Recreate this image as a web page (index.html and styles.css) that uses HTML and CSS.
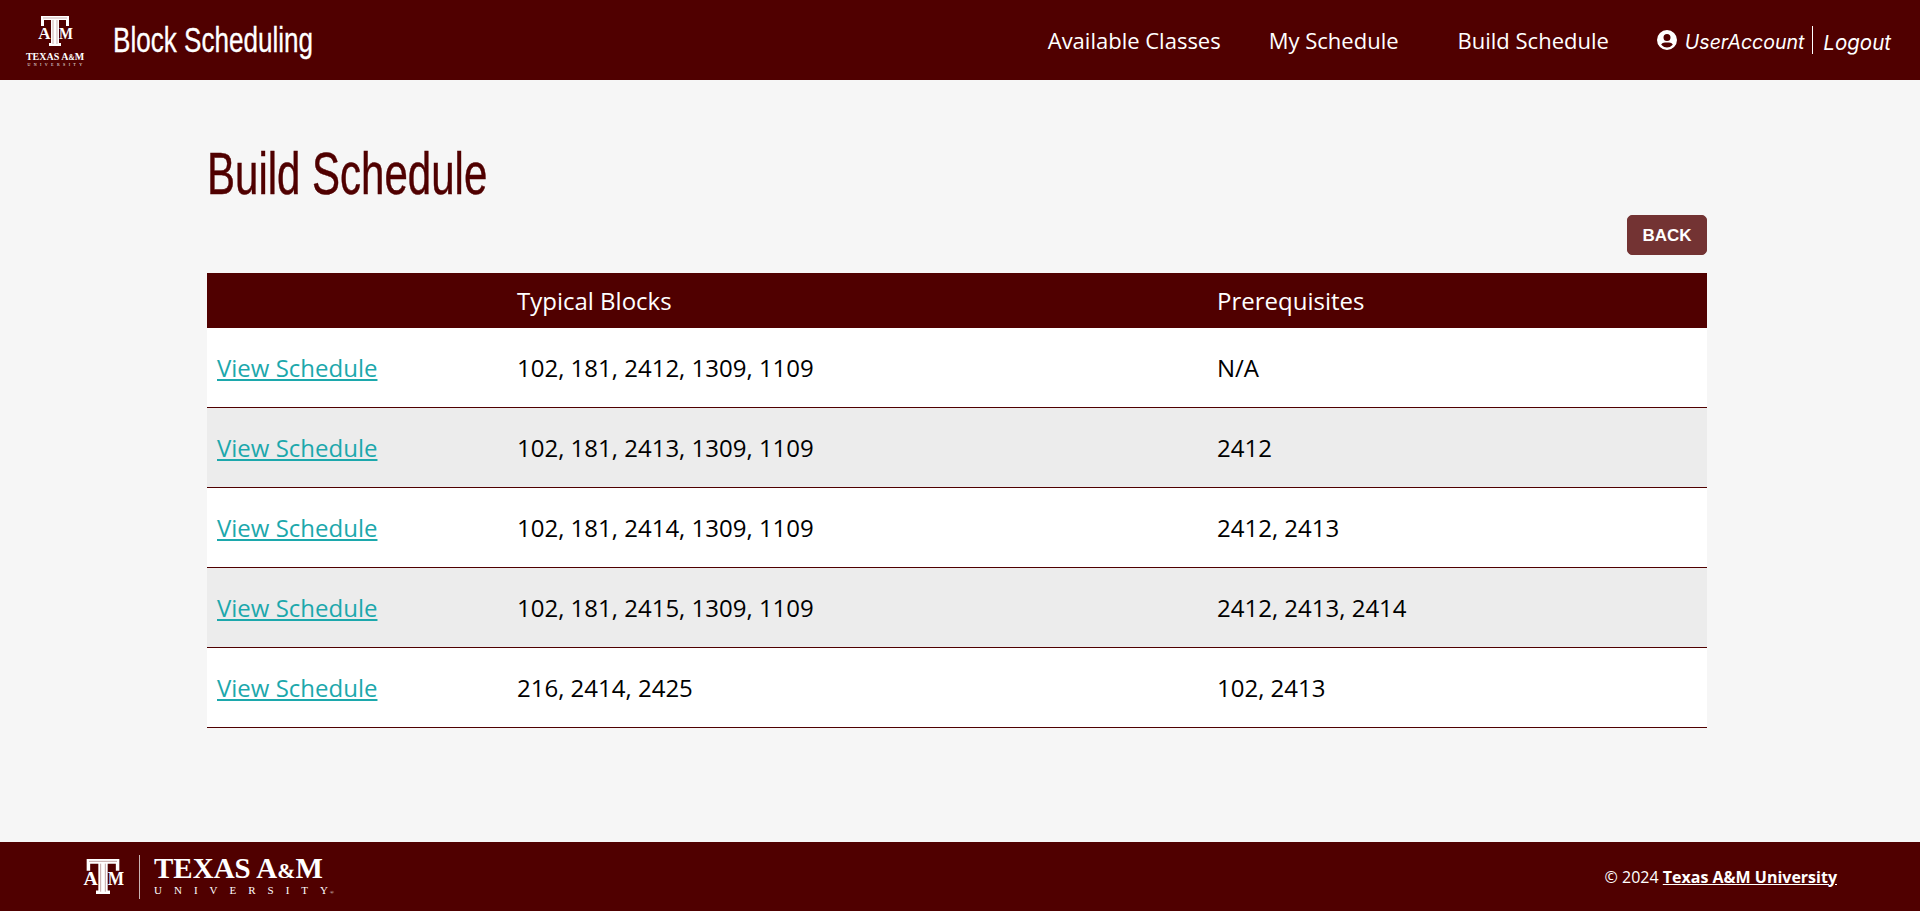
FILE: index.html
```html
<!DOCTYPE html>
<html lang="en">
<head>
	<meta charset="UTF-8">
	<title>Block Scheduling</title>
	<link rel="stylesheet" href="styles.css">
</head>
<body>
<svg class="defs" width="0" height="0">
    <symbol id="atm" viewBox="0 0 36 30">
        <path fill="#fff" d="M4 0H32V10H29V4H22V27H24V30H12V27H14V4H7V10H4Z"/>
        <path fill="none" stroke="#a98080" stroke-width=".6" d="M6 2H30M16 4V28M20 4V28"/>
        <text x="7.500" y="22.500" text-anchor="middle" class="logoLetter">A</text>
        <text x="22" y="22.500" textLength="14" lengthAdjust="spacingAndGlyphs" class="logoLetter">M</text>
    </symbol>
</svg>
<header class="topBar">
    <a class="brand" href="#">
        <span class="brandLogo">
            <svg class="brandMark"><use href="#atm"/></svg>
            <span class="brandName">TEXAS A<small>&amp;</small>M</span>
            <span class="brandSub">UNIVERSITY</span>
        </span>
        <span class="appName">Block Scheduling</span>
    </a>
    <nav class="mainNav">
        <a href="#" class="navClasses">Available Classes</a>
        <a href="#" class="navMine">My Schedule</a>
        <a href="#" class="navBuild">Build Schedule</a>
    </nav>
    <div class="account">
        <svg class="userIcon" viewBox="0 0 20 20"><path fill="#fff" fill-rule="evenodd" d="M10 0a10 10 0 1 0 0 20a10 10 0 0 0 0-20ZM10 4a3.500 3.500 0 1 1 0 7a3.500 3.500 0 0 1 0-7ZM10 17.500a7.700 7.700 0 0 1-5.800-2.700c.7-1.400 2.100-2.300 3.800-2.300h4c1.700 0 3.100.9 3.800 2.300a7.700 7.700 0 0 1-5.800 2.700Z"/></svg>
        <span class="userName">UserAccount</span>
        <a href="#" class="logout">Logout</a>
    </div>
</header>

<main class="content">
    <h1 class="pageTitle">Build Schedule</h1>
    <div class="actions"><button class="backBtn">BACK</button></div>
    <table class="blocks">
        <thead><tr><th></th><th>Typical Blocks</th><th>Prerequisites</th></tr></thead>
        <tbody>
            <tr><td><a href="#">View Schedule</a></td><td>102, 181, 2412, 1309, 1109</td><td>N/A</td></tr>
            <tr><td><a href="#">View Schedule</a></td><td>102, 181, 2413, 1309, 1109</td><td>2412</td></tr>
            <tr><td><a href="#">View Schedule</a></td><td>102, 181, 2414, 1309, 1109</td><td>2412, 2413</td></tr>
            <tr><td><a href="#">View Schedule</a></td><td>102, 181, 2415, 1309, 1109</td><td>2412, 2413, 2414</td></tr>
            <tr><td><a href="#">View Schedule</a></td><td>216, 2414, 2425</td><td>102, 2413</td></tr>
        </tbody>
    </table>
</main>

<footer class="bottomBar">
    <div class="footLogo">
        <svg class="footMark"><use href="#atm"/></svg>
        <div class="footWords">
            <span class="footName">TEXAS A<small>&amp;</small>M</span>
            <span class="footSub">UNIVERSIT<span class="lastY">Y</span><span class="regMark">®</span></span>
        </div>
    </div>
    <p class="copy">© 2024 <a href="#">Texas A&amp;M University</a></p>
</footer>
</body>
</html>
```

FILE: styles.css
```css
body,html{
    padding: 0;
    margin: 0;
    height: 100%;
}
body{
    display: flex;
    flex-direction: column;
    background: #f6f6f6;
    color: #000000;
    font-family: "Open Sans", "Liberation Sans", sans-serif;
}
a{
    color: inherit;
}
small{
    font-size: 75%;
}
.defs{
    display: none;
}
.logoLetter{
    font-family: "Liberation Serif", serif;
    font-weight: 700;
    font-size: 17px;
    fill: #ffffff;
}

/* header */
.topBar{
    flex: none;
    display: flex;
    align-items: center;
    height: 80px;
    background: #500000;
    color: #ffffff;
}
.brand{
    display: flex;
    align-items: center;
    margin-left: 25px;
    text-decoration: none;
}
.brandLogo{
    display: flex;
    flex-direction: column;
    align-items: center;
    width: 60px;
    margin-top: 2px;
}
.brandMark{
    width: 36px;
    height: 30px;
}
.brandName{
    margin-top: 6px;
    font-family: "Liberation Serif", serif;
    font-size: 10px;
    font-weight: 700;
    line-height: 9px;
    white-space: nowrap;
}
.brandSub{
    font-family: "Liberation Serif", serif;
    font-size: 4px;
    line-height: 5px;
    letter-spacing: 3.400px;
    margin-right: -3px;
}
/* no condensed face installed, so these are squeezed by hand */
.appName{
    margin-left: 28px;
    font-family: "Liberation Sans", sans-serif;
    font-size: 35px;
    transform: scaleX(.745);
    transform-origin: left center;
    -webkit-text-stroke: .3px #ffffff;
}
.mainNav{
    display: flex;
    margin-left: auto;
    font-size: 22px;
}
.mainNav a{
    text-decoration: none;
}
.navClasses{
    margin-right: 48px;
}
.navMine{
    margin-right: 59px;
}
.navBuild{
    margin-right: 48px;
}
.account{
    display: flex;
    align-items: center;
    margin-right: 29px;
    font-family: "Inter", sans-serif;
    font-style: italic;
    font-size: 19.500px;
}
.userIcon{
    width: 20px;
    height: 20px;
    margin-right: 8px;
}
.userName{
    height: 28px;
    padding-right: 8px;
    border-right: 1px solid #ffffff;
    line-height: 33px;
}
.logout{
    height: 28px;
    margin-left: 10px;
    font-size: 20.500px;
    line-height: 33px;
    text-decoration: none;
}

/* main */
.content{
    flex: 1;
    width: 1500px;
    margin: 0 213px 0 207px;
}
.pageTitle{
    margin: 58px 0 0 0;
    color: #500000;
    font-family: "Liberation Sans", sans-serif;
    font-size: 59px;
    font-weight: 400;
    line-height: 72px;
    transform: scaleX(.712);
    transform-origin: left center;
    -webkit-text-stroke: .5px #500000;
}
.actions{
    display: flex;
    justify-content: flex-end;
    margin-top: 5px;
}
.backBtn{
    width: 80px;
    height: 40px;
    padding: 1px 0 0 0;
    border: 1px solid #733333;
    border-radius: 5px;
    background: #733333;
    color: #ffffff;
    font-family: "Liberation Sans", sans-serif;
    font-size: 17px;
    font-weight: 700;
}
.blocks{
    width: 100%;
    margin-top: 18px;
    border-collapse: collapse;
    table-layout: fixed;
    font-size: 24px;
}
.blocks th,.blocks td{
    padding: 0 10px;
}
.blocks th{
    box-sizing: border-box;
    height: 55px;
    font-weight: 400;
    text-align: left;
}
.blocks th:nth-child(1){
    width: 300px;
}
.blocks th:nth-child(2){
    width: 700px;
}
.blocks thead{
    background: #500000;
    color: #ffffff;
}
.blocks td{
    height: 79px;
    border-bottom: 1px solid #500000;
}
.blocks tbody tr{
    background: #ffffff;
}
.blocks tbody tr:nth-child(even){
    background: #ececec;
}
.blocks a{
    color: #1ca8ac;
}

/* footer */
.bottomBar{
    flex: none;
    display: flex;
    align-items: center;
    justify-content: space-between;
    height: 69px;
    padding: 0 83px 0 82px;
    background: #500000;
    color: #ffffff;
}
.footLogo{
    display: flex;
    align-items: center;
}
.footMark{
    width: 42px;
    height: 35px;
}
.footWords{
    display: flex;
    flex-direction: column;
    margin-left: 15px;
    padding-left: 14px;
    border-left: 1px solid #c9b4b4;
    font-family: "Liberation Serif", serif;
}
.footName{
    font-size: 29px;
    font-weight: 700;
    line-height: 26px;
    white-space: nowrap;
}
.footSub{
    font-size: 11px;
    line-height: 12px;
    letter-spacing: 12px;
    white-space: nowrap;
}
.lastY{
    letter-spacing: 2px;
}
.regMark{
    font-size: 5px;
    letter-spacing: 0;
}
.copy{
    margin: 0;
    font-size: 16px;
}
.copy a{
    font-weight: 700;
}
```
